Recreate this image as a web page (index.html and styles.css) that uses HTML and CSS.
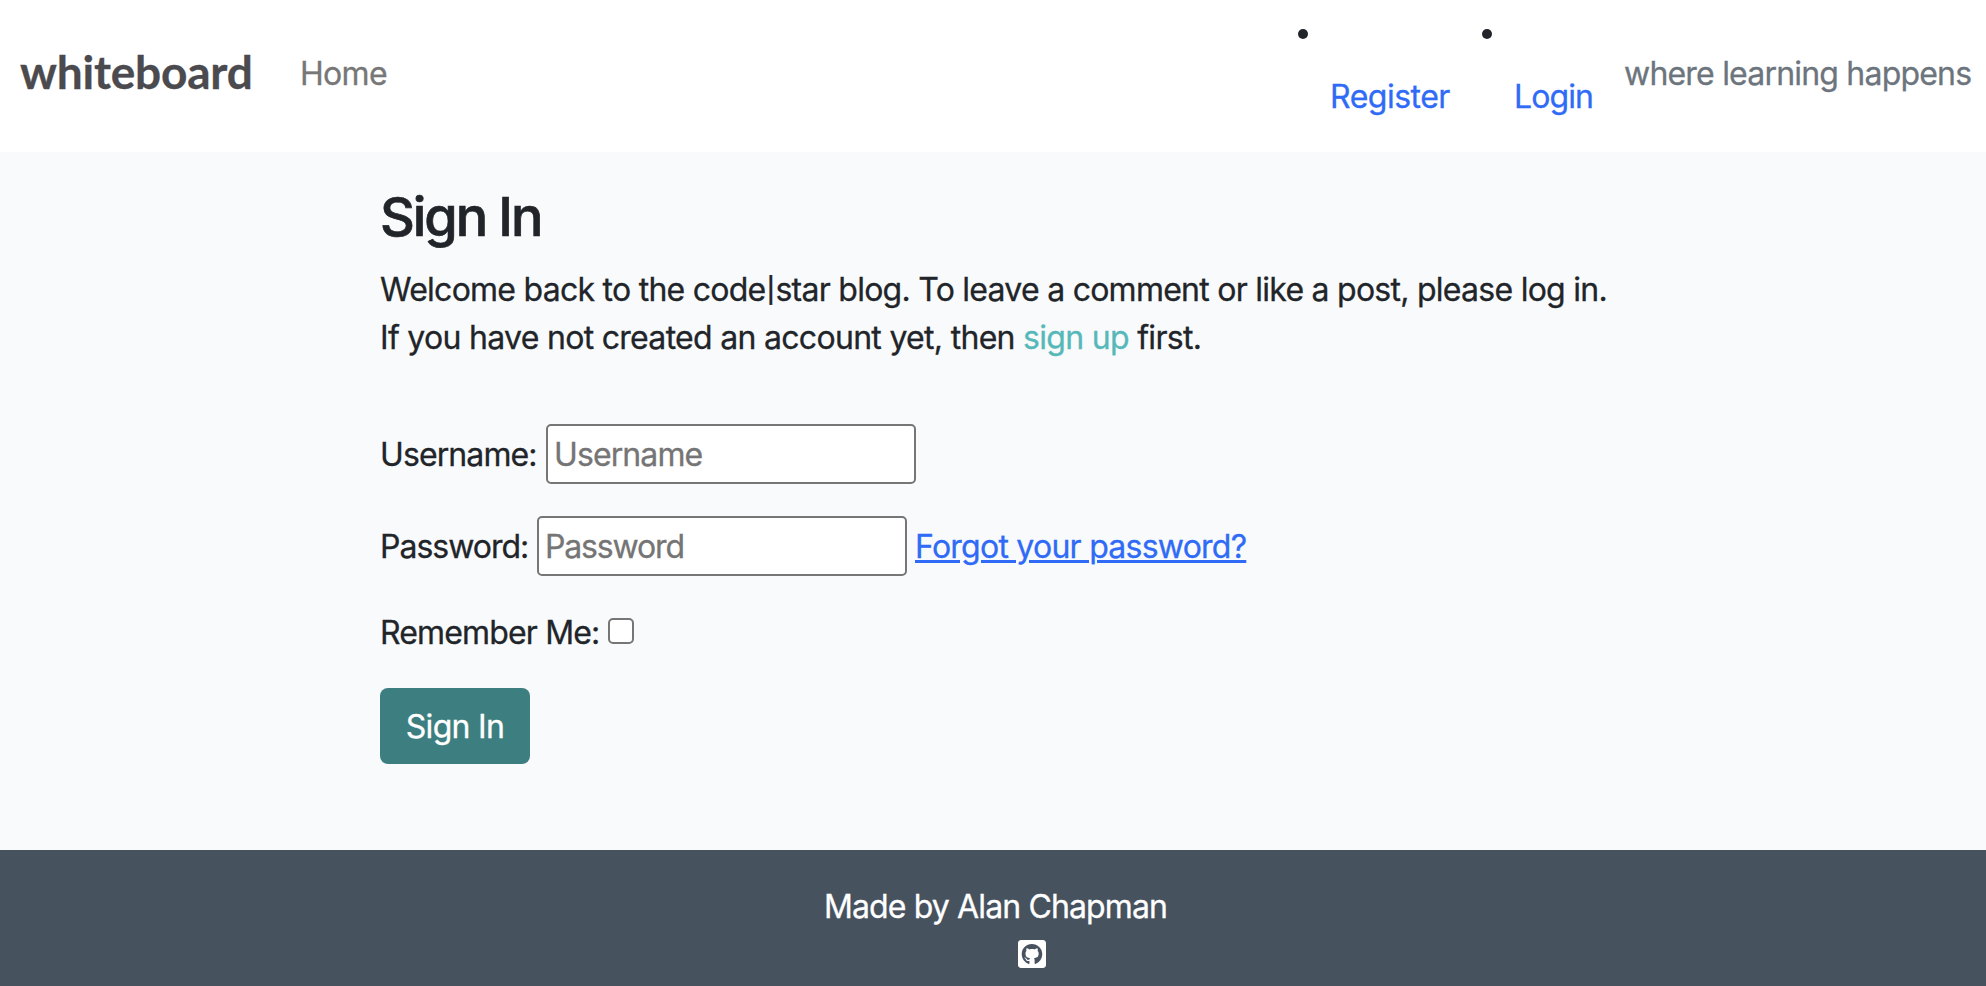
FILE: index.html
```html
<!DOCTYPE html>
<html lang="en">
<head>
<meta charset="utf-8">
<title>whiteboard</title>
<link rel="stylesheet" href="styles.css">
</head>
<body>
<header class="navbar">
  <a class="brand" href="#">whiteboard</a>
  <a class="home" href="#">Home</a>
  <ul class="account">
    <li class="item"><a class="register" href="#">Register</a></li>
    <li class="item"><a class="login" href="#">Login</a></li>
  </ul>
  <span class="tagline">where learning happens</span>
</header>
<main class="content">
  <h3 class="title">Sign In</h3>
  <p class="intro"><span class="line1">Welcome back to the code<span class="bar">|</span>star blog. To leave a comment or like a post, please log in.</span><br><span class="line2">If you have not created an account yet, then <a class="signup" href="#">sign up</a> first.</span></p>
  <form class="form">
    <div class="row"><label class="label user-label" for="u">Username:</label><input class="field user-field" id="u" type="text" placeholder="Username"></div>
    <div class="row"><label class="label pass-label" for="p">Password:</label><input class="field pass-field" id="p" type="password" placeholder="Password"><a class="forgot" href="#">Forgot your password?</a></div>
    <div class="row remember"><label class="label remember-label" for="r">Remember Me:</label><input class="check" id="r" type="checkbox"></div>
    <button class="submit" type="button">Sign In</button>
  </form>
</main>
<footer class="footer">
  <p class="credit">Made by Alan Chapman</p>
  <a class="github" href="#"><svg viewBox="0 32 448 448" width="28" height="28" fill="currentColor"><path d="M400 32H48C21.5 32 0 53.5 0 80v352c0 26.5 21.5 48 48 48h352c26.5 0 48-21.5 48-48V80c0-26.5-21.5-48-48-48zM265.8 407.7c0-1.8 0-6 .1-11.6c.1-11.4 .1-28.8 .1-43.7c0-15.6-5.2-25.5-11.3-30.7c37-4.1 76-9.2 76-73.1c0-18.2-6.5-27.3-17.1-39c1.7-4.3 7.4-22-1.7-45c-13.9-4.3-45.7 17.9-45.7 17.9c-13.2-3.7-27.5-5.6-41.6-5.6s-28.4 1.9-41.6 5.6c0 0-31.8-22.2-45.7-17.9c-9.1 22.9-3.5 40.6-1.7 45c-10.6 11.7-15.6 20.8-15.6 39c0 63.6 37.3 69 74.3 73.1c-4.8 4.3-9.1 11.7-10.6 22.3c-9.5 4.3-33.8 11.7-48.3-13.9c-9.1-15.8-25.5-17.1-25.5-17.1c-16.2-.2-1.1 10.2-1.1 10.2c10.8 5 18.4 24.2 18.4 24.2c9.7 29.7 56.1 19.7 56.1 19.7c0 9 .1 21.7 .1 30.6c0 4.8 .1 8.6 .1 10c0 4.3-3 9.5-11.5 8C106 393.6 59.8 330.8 59.8 257.4c0-91.8 70.2-161.5 162-161.5s166.2 69.7 166.2 161.5c.1 73.4-44.7 136.3-110.7 158.3c-8.4 1.5-11.5-3.7-11.5-8z"/></svg></a>
</footer>
</body>
</html>
```
FILE: styles.css
```css
* { box-sizing: border-box; }
body {
  margin: 0;
  min-height: 986px;
  display: flex;
  flex-direction: column;
  font: 400 32px/48px Inter, "Liberation Sans", sans-serif;
  letter-spacing: -0.7px;
  -webkit-text-stroke: 0.3px currentColor;
  color: #212529;
  background: #f9fafc;
}
a { text-decoration: none; }
.navbar {
  height: 152px;
  flex: none;
  display: flex;
  align-items: center;
  padding: 0 15px 5px 20px;
  background: #fff;
}
.brand {
  width: 280px;
  padding-bottom: 3px;
  font: 700 46px/60px Lato, sans-serif;
  letter-spacing: -0.2px;
  color: #4a4a4f;
}
.home { color: #777; }
.account {
  display: flex;
  align-self: flex-start;
  margin: 10px 0 0 auto;
  padding: 0;
  list-style: none;
}
.item { position: relative; padding-top: 63px; }
.item::before {
  content: "";
  position: absolute;
  left: -32px;
  top: 19px;
  width: 10px;
  height: 10px;
  border-radius: 50%;
  background: #212529;
}
.item a { display: block; color: #2f6bf6; }
.item .register { letter-spacing: -0.5px; }
.item .login { letter-spacing: -0.9px; }
.item:first-child { width: 184px; }
.item:last-child { width: 110px; }
.tagline { width: 347px; white-space: nowrap; letter-spacing: -0.8px; color: #6c757d; }
.content { flex: 1; padding: 31px 0 0 380px; }
.title { margin: 0 0 16px; font-size: 54px; line-height: 67px; font-weight: 500; letter-spacing: -2.1px; -webkit-text-stroke-width: 0.7px; }
.intro { margin: 0; white-space: nowrap; line-height: 48px; }
.line1 { letter-spacing: -0.74px; }
.bar { display: inline-block; line-height: 1; transform: scaleY(0.78); }
.signup { color: #57b8b9; }
.form { margin-top: 62px; }
.row { display: flex; align-items: center; height: 60px; margin-bottom: 32px; }
.label { flex: none; padding-top: 1px; }
.user-label { width: 166px; letter-spacing: -0.9px; }
.pass-label { width: 157px; letter-spacing: -1px; }
.field {
  width: 370px;
  height: 60px;
  padding: 2px 6px;
  border: 2px solid #767676;
  border-radius: 5px;
  background: #fff;
  font: inherit;
  letter-spacing: -0.9px;
}
.pass-field { letter-spacing: -1.15px; }
.field::placeholder { color: #757575; opacity: 1; }
.forgot {
  margin-left: 8px;
  padding-top: 1px;
  color: #2f6bf6;
  letter-spacing: -0.75px;
  text-decoration: underline;
  text-decoration-thickness: 3px;
}
.remember { height: 48px; margin-bottom: 32px; }
.remember-label { width: 228px; letter-spacing: -0.85px; }
.check {
  appearance: none;
  width: 26px;
  height: 26px;
  margin: 0 0 2px;
  border: 2px solid #767676;
  border-radius: 5px;
  background: #fff;
}
.submit {
  display: block;
  width: 150px;
  height: 76px;
  padding: 2px 0 0;
  border: 0;
  border-radius: 8px;
  background: #3d7f80;
  color: #fff;
  font: inherit;
  letter-spacing: inherit;
}
.footer {
  flex: none;
  height: 136px;
  display: flex;
  flex-direction: column;
  align-items: center;
  padding-top: 33px;
  background: #47525f;
  color: #fff;
}
.credit { margin: 0; padding-left: 5px; letter-spacing: -0.87px; }
.github { height: 28px; margin: 9px 0 0 78px; color: #fff; }
.github svg { display: block; }
```
